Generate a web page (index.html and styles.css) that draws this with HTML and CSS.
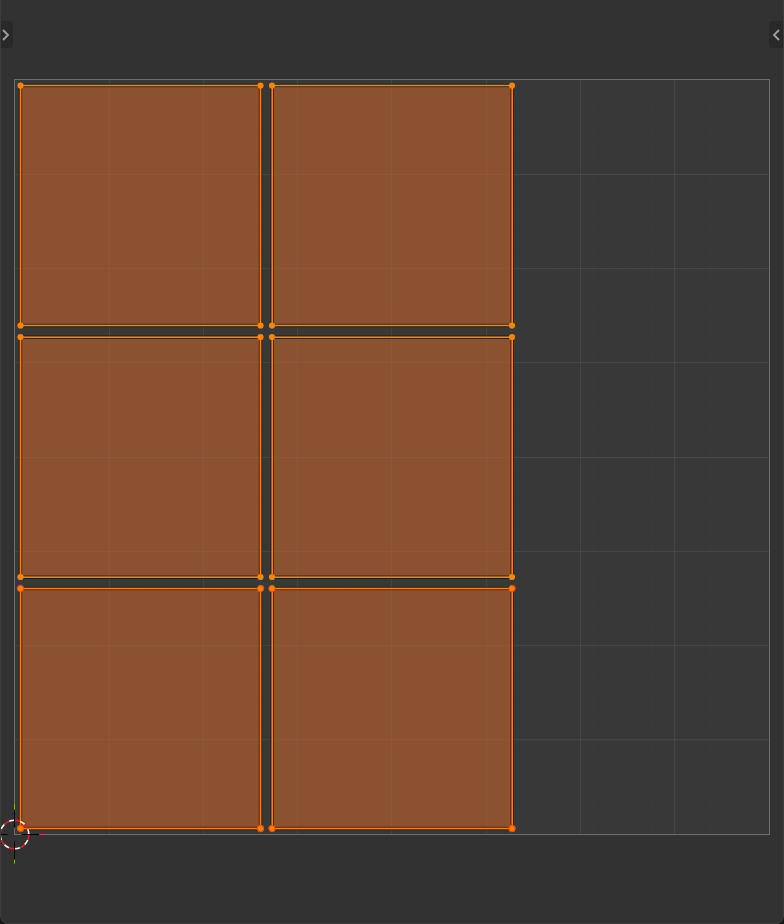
FILE: index.html
```html
<!DOCTYPE html>
<html lang="en">
<head>
<meta charset="utf-8">
<title>UV Editor</title>
<link rel="stylesheet" href="styles.css">
</head>
<body>
<main class="editor">
  <svg class="canvas" viewBox="0 0 784 924" role="img" aria-label="UV layout">
    <defs>
      <pattern id="minor" x="14.5" y="79.5" width="11.797" height="11.797" patternUnits="userSpaceOnUse">
        <path class="minor-line" d="M0 0H11.797M0 0V11.797"/>
      </pattern>
      <g id="face">
        <rect class="face-outline" width="240" height="240"/>
        <rect class="face-edge" width="240" height="240"/>
      </g>
      <g id="points">
        <circle r="3.1"/><circle cx="240" r="3.1"/><circle cy="240" r="3.1"/><circle cx="240" cy="240" r="3.1"/>
      </g>
    </defs>

    <rect class="tile" x="14.5" y="79.5" width="755" height="755"/>
    <rect fill="url(#minor)" x="14.5" y="79.5" width="755" height="755"/>

    <g class="fills">
      <rect x="20.5" y="85.5" width="240" height="240"/>
      <rect x="272" y="85.5" width="240" height="240"/>
      <rect x="20.5" y="337" width="240" height="240"/>
      <rect x="272" y="337" width="240" height="240"/>
      <rect x="20.5" y="588.5" width="240" height="240"/>
      <rect x="272" y="588.5" width="240" height="240"/>
    </g>
    <path class="major-line" d="M109.5 80V834M203.5 80V834M297.5 80V834M391.5 80V834M486.5 80V834M580.5 80V834M674.5 80V834M15 174.5H769M15 268.5H769M15 362.5H769M15 457.5H769M15 551.5H769M15 645.5H769M15 739.5H769"/>
    <rect class="border" x="14.5" y="79.5" width="755" height="755"/>

    <use href="#face" x="20.5" y="85.5"/>
    <use href="#face" x="272.2" y="85.5"/>
    <use href="#face" x="20.5" y="337.2"/>
    <use href="#face" x="272.2" y="337.2"/>
    <use href="#face" x="20.5" y="588.5"/>
    <use href="#face" x="272.2" y="588.5"/>
    <g class="points">
      <use href="#points" x="20.5" y="85.5"/>
      <use href="#points" x="272" y="85.5"/>
      <use href="#points" x="20.5" y="337"/>
      <use href="#points" x="272" y="337"/>
    </g>
    <g class="points active">
      <use href="#points" x="20.5" y="588.5"/>
      <use href="#points" x="272" y="588.5"/>
    </g>

    <g class="cursor" transform="translate(14.5 834.5)">
      <circle class="ring" r="14.3" pathLength="16"/>
      <circle class="ring-dash" r="14.3" pathLength="16"/>
      <path class="cross" d="M0-25V-7M0 7V25M-25 0H-7M7 0H25"/>
      <path class="axis-x" d="M25 0H30"/>
      <path class="axis-y" d="M0-30V-25M0 25V29"/>
    </g>
  </svg>
  <button class="toggle toggle-left" type="button" aria-label="Show toolbar">
    <svg class="chevron" viewBox="0 0 8 12"><path d="M1 1L6 6L1 11"/></svg>
  </button>
  <button class="toggle toggle-right" type="button" aria-label="Show sidebar">
    <svg class="chevron" viewBox="0 0 8 12"><path d="M7 1L2 6L7 11"/></svg>
  </button>
</main>
</body>
</html>
```
FILE: styles.css
```css
body {
  margin: 0;
  background: #181818;
}
.editor {
  position: relative;
  box-sizing: border-box;
  min-height: 100vh;
  overflow: hidden;
  background: #323232;
  border-radius: 0 0 8px 8px;
}
.editor::after {
  content: "";
  position: absolute;
  inset: 0;
  border: 1px solid #3c3c3c;
  border-top: 0;
  border-radius: 0 0 8px 8px;
  pointer-events: none;
}
.canvas {
  display: block;
  width: 100%;
}
.tile { fill: #383838; }
.minor-line { fill: none; stroke: #3b3b3b; }
.major-line { fill: none; stroke: #808080; stroke-opacity: .18; }
.border { fill: none; stroke: #6c6c6c; }
.fills { fill: #8c5130; }
.face-outline { fill: none; stroke: #1c1108; stroke-width: 3.4; stroke-opacity: .75; }
.face-edge { fill: none; stroke: #f58200; stroke-width: 1.6; }
.points { fill: #ff8500; }
.points.active { stroke: #ff4a00; stroke-width: 1.2; }
.ring, .ring-dash, .cross, .axis-x, .axis-y { fill: none; }
.ring { stroke: #f4f4f4; stroke-width: 1.6; stroke-dasharray: 1 1; stroke-dashoffset: 1; }
.ring-dash { stroke: #e81c1c; stroke-width: 1.6; stroke-dasharray: 1 1; }
.cross { stroke: #000; }
.axis-x { stroke: #f5304c; }
.axis-y { stroke: #76b900; }
.toggle {
  position: absolute;
  top: 21px;
  display: flex;
  align-items: center;
  width: 13px;
  height: 27px;
  padding: 0;
  border: 0;
  background: #292929;
}
.toggle-left {
  left: 0;
  padding-left: 2px;
  border-radius: 0 4px 4px 0;
}
.toggle-right {
  right: 1px;
  width: 14px;
  padding-left: 3px;
  border-radius: 4px 0 0 4px;
}
.chevron {
  flex: none;
  width: 8px;
  height: 12px;
  fill: none;
  stroke: #a0a0a0;
  stroke-width: 1.8;
}
```
